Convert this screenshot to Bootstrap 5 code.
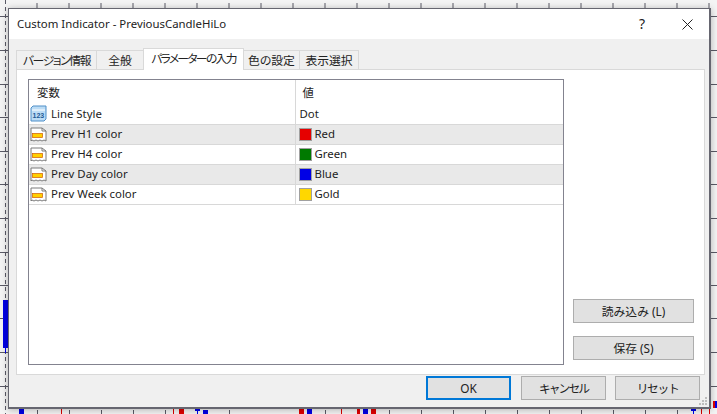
<!DOCTYPE html>
<html lang="ja"><head><meta charset="utf-8">
<link href="https://cdn.jsdelivr.net/npm/bootstrap@5.3.0/dist/css/bootstrap.min.css" rel="stylesheet">
<style>
html,body{margin:0;width:717px;height:414px;overflow:hidden;background:#f4f4f4}
body{font:11.4px/16px "Noto Sans","Noto Sans CJK JP",sans-serif;color:#222;font-feature-settings:"palt"}
.chartbg{position:absolute;left:0;top:0}
.dlg{position:absolute;left:8px;top:8px;width:703px;height:401px;background:#f0f0f0;border:1px solid #666670;border-width:1px 2px 2px 1px;box-shadow:0 1px 7px rgba(0,0,0,.28);display:flex;flex-direction:column}
.ttl{height:30px;background:#fff;padding-left:8px;display:flex;align-items:center;flex:none}
.ttl span{flex:1}
.helpq{width:46px;text-align:center;font-size:14px}
.xbtn{width:44px;display:flex;justify-content:center}
.bodyarea{padding:8px 4px 0 7px;display:flex;flex-direction:column;flex:1}
.nav-tabs.tabstrip{border:0;height:22px;padding-left:1px;align-items:flex-end;flex-wrap:nowrap}
.tabstrip .nav-item{margin-left:-1px}
.tabstrip .nav-item:nth-child(1){width:81px}
.tabstrip .nav-item:nth-child(2){width:48px}
.tabstrip .nav-item:nth-child(3){width:101px}
.tabstrip .nav-item:nth-child(4){width:57px}
.tabstrip .nav-item:nth-child(5){width:60px}
.tabstrip .nav-link{height:19px;padding:0;text-align:center;border:1px solid #d9d9d9;border-bottom:0;border-radius:0;color:#222;background:#f0f0f0;margin:0;font-size:11.8px;line-height:19px;white-space:nowrap}
.tabstrip .nav-item:nth-child(1) .nav-link{letter-spacing:-1.4px}
.tabstrip .nav-link.active{height:22px;background:#fff;color:#222;border-color:#d9d9d9;line-height:19px;position:relative;z-index:1;margin-bottom:-1px;letter-spacing:-1.7px}
.tabpage{height:306px;background:#fff;border:1px solid #d9d9d9;padding:9px 9px 9px 11px;display:flex;gap:9px}
.listwrap{width:536px;height:286px;border:1px solid #83838f;background:#fff;flex:none}
.table.vars{width:100%;margin:0;table-layout:fixed;border-collapse:collapse;font-size:11.4px;color:#222}
.vars th,.vars td{padding:0;border:0;height:20px;vertical-align:middle;font-weight:400;background:transparent;box-shadow:none;color:#222}
.vars th{height:24px;padding-top:1px}
.vars td{border-bottom:1px solid #d8d8d8}
.vars th:first-child{padding-left:8px;width:266px}
.vars th+th{border-left:1px solid #d8d8d8;padding-left:7px}
.vars td+td{border-left:1px solid #d8d8d8;padding-left:4px}
.vars tr.shade td{background:#e9e9e9}
.cellin{display:flex;align-items:center;gap:4px;height:19px}
.cellin svg{flex:none;margin-left:1px}
.sw{width:13px;height:13px;border:1px solid #a0a0a0;flex:none;margin:0 -1px 0 -1px}
.sidebtns{display:flex;flex-direction:column;justify-content:flex-end;gap:13px;padding-bottom:2px;width:121px;height:283px}
.btn.winbtn{--bs-btn-border-radius:0;width:100%;height:24px;padding:0;background:#e1e1e1;border:1px solid #adadad;color:#222;font-size:11.8px;line-height:21px}
.footbtns{display:flex;justify-content:flex-end;gap:10px;padding:1px 5px 0 0}
.footbtns .btn.winbtn{width:85px}
.footbtns .btn.winbtn:nth-child(2){letter-spacing:-2px}
.footbtns .btn.winbtn:last-child{margin-left:-1px;letter-spacing:-1.4px}
.footbtns .btn.winbtn.dflt{border:2px solid #0078d7;line-height:19px}
.grip{position:absolute;right:1px;bottom:1px}
</style></head><body>
<svg class="chartbg" width="717" height="414" xmlns="http://www.w3.org/2000/svg">
<g stroke="#5a5a66"><path d="M37 3V8M69 3V8M101 3V8M133 3V8M165 3V8M197 3V8M229 3V8M261 3V8M293 3V8M325 3V8M357 3V8M389 3V8M421 3V8M453 3V8M485 3V8M517 3V8M549 3V8M581 3V8M613 3V8M645 3V8M677 3V8M709 3V8"/>
<path d="M37.500 410V414M69.500 410V414M101.500 410V414M133.500 410V414M165.500 410V414M229.500 410V414M325.500 410V414M389.500 410V414M421.500 410V414M453.500 410V414M485.500 410V414M517.500 410V414M549.500 410V414M581.500 410V414M613.500 410V414M645.500 410V414M677.500 410V414"/>
<path d="M5.500 0V414" stroke-dasharray="4 3"/><path d="M0 16.500H8M0 50.500H8M0 84.500H8M0 117.500H8M0 151.500H8M0 184.500H8M0 218.500H8M0 252.500H8M0 285.500H8M0 318.500H8M0 352.500H8M0 386.500H8M711 16.500H717M711 50.500H717M711 84.500H717M711 117.500H717M711 151.500H717M711 184.500H717M711 218.500H717M711 252.500H717M711 285.500H717M711 318.500H717M711 352.500H717M711 386.500H717"/></g>
<rect x="3" y="300" width="5" height="48" fill="#0000e6"/><path d="M5.500 348V353" stroke="#00e"/>
<rect x="19" y="409" width="5" height="5" fill="#0000e6"/><path d="M61.500 409V414" stroke="#d00"/>
<rect x="179" y="409" width="5" height="5" fill="#e00000"/><rect x="203" y="410" width="5" height="4" fill="#0000e6"/><rect x="195" y="409" width="5" height="2" fill="#0000e6"/><path d="M197.500 409V414" stroke="#00e"/>
<path d="M173.500 409V414" stroke="#d00"/><rect x="299" y="409" width="5" height="5" fill="#e00000"/><rect x="307" y="409" width="5" height="5" fill="#0000e6"/>
<path d="M341.500 409V414" stroke="#d00"/><rect x="357" y="409" width="3" height="5" fill="#e00000"/><rect x="363" y="409" width="5" height="5" fill="#0000e6"/><rect x="371" y="409" width="5" height="5" fill="#e00000"/>
<path d="M693.500 409V414" stroke="#00e"/><rect x="691" y="409" width="5" height="2" fill="#0000e6"/><path d="M701.500 409V414M709.500 409V414" stroke="#d00"/>
<rect x="713" y="401" width="2" height="7" fill="#e00000"/><rect x="715" y="401" width="2" height="7" fill="#0000e6"/>
</svg>
<div class="dlg">
<div class="ttl"><span>Custom Indicator - PreviousCandleHiLo</span><div class="helpq">?</div><div class="xbtn"><svg width="11" height="11" viewBox="0 0 11 11"><path d="M.5.500 10.500 10.500M10.500.500.500 10.500" stroke="#222" fill="none"/></svg></div></div>
<div class="bodyarea">
<ul class="nav nav-tabs tabstrip">
<li class="nav-item"><a class="nav-link">バージョン情報</a></li>
<li class="nav-item"><a class="nav-link">全般</a></li>
<li class="nav-item"><a class="nav-link active">パラメーターの入力</a></li>
<li class="nav-item"><a class="nav-link">色の設定</a></li>
<li class="nav-item"><a class="nav-link">表示選択</a></li>
</ul>
<div class="tabpage">
<div class="listwrap">
<table class="table vars"><thead><tr><th>変数</th><th>値</th></tr></thead><tbody>
<tr><td><div class="cellin"><svg width="17" height="17" viewBox="0 0 17 17"><path d="M1 3 3 1H16V14L14 16H1Z" fill="#bcdcf5" stroke="#4f8fc8"/><path d="M2 5H15" stroke="#fff"/><text x="2.500" y="13" font-size="7" font-weight="700" fill="#1c5a96" font-family="Liberation Sans">123</text></svg>Line Style</div></td><td><div class="cellin">Dot</div></td></tr>
<tr class="shade"><td><div class="cellin"><svg width="17" height="17" viewBox="0 0 17 17"><path d="M1 15V2H12L16 5V15L14 14 12 15 10 14 8 15 6 14 4 15 2 14Z" fill="#fff" stroke="#7a7a7a"/><path d="M12 2V5H16" fill="none" stroke="#7a7a7a"/><rect x="2.500" y="7.500" width="10" height="4" fill="#ffd000" stroke="#d05a00" stroke-width=".7"/></svg>Prev H1 color</div></td><td><div class="cellin"><i class="sw" style="background:#e60000"></i>Red</div></td></tr>
<tr><td><div class="cellin"><svg width="17" height="17" viewBox="0 0 17 17"><path d="M1 15V2H12L16 5V15L14 14 12 15 10 14 8 15 6 14 4 15 2 14Z" fill="#fff" stroke="#7a7a7a"/><path d="M12 2V5H16" fill="none" stroke="#7a7a7a"/><rect x="2.500" y="7.500" width="10" height="4" fill="#ffd000" stroke="#d05a00" stroke-width=".7"/></svg>Prev H4 color</div></td><td><div class="cellin"><i class="sw" style="background:#007a00"></i>Green</div></td></tr>
<tr class="shade"><td><div class="cellin"><svg width="17" height="17" viewBox="0 0 17 17"><path d="M1 15V2H12L16 5V15L14 14 12 15 10 14 8 15 6 14 4 15 2 14Z" fill="#fff" stroke="#7a7a7a"/><path d="M12 2V5H16" fill="none" stroke="#7a7a7a"/><rect x="2.500" y="7.500" width="10" height="4" fill="#ffd000" stroke="#d05a00" stroke-width=".7"/></svg>Prev Day color</div></td><td><div class="cellin"><i class="sw" style="background:#0000e6"></i>Blue</div></td></tr>
<tr><td><div class="cellin"><svg width="17" height="17" viewBox="0 0 17 17"><path d="M1 15V2H12L16 5V15L14 14 12 15 10 14 8 15 6 14 4 15 2 14Z" fill="#fff" stroke="#7a7a7a"/><path d="M12 2V5H16" fill="none" stroke="#7a7a7a"/><rect x="2.500" y="7.500" width="10" height="4" fill="#ffd000" stroke="#d05a00" stroke-width=".7"/></svg>Prev Week color</div></td><td><div class="cellin"><i class="sw" style="background:#ffd700"></i>Gold</div></td></tr>
</tbody></table>
</div>
<div class="sidebtns"><button class="btn winbtn">読み込み (L)</button><button class="btn winbtn">保存 (S)</button></div>
</div>
<div class="footbtns"><button class="btn winbtn dflt">OK</button><button class="btn winbtn">キャンセル</button><button class="btn winbtn">リセット</button></div>
</div>
<svg class="grip" width="10" height="10" viewBox="0 0 10 10" fill="#bdbdbd"><rect x="7" y="1" width="2" height="2"/><rect x="4" y="4" width="2" height="2"/><rect x="7" y="4" width="2" height="2"/><rect x="1" y="7" width="2" height="2"/><rect x="4" y="7" width="2" height="2"/><rect x="7" y="7" width="2" height="2"/></svg>
</div>
</body></html>
